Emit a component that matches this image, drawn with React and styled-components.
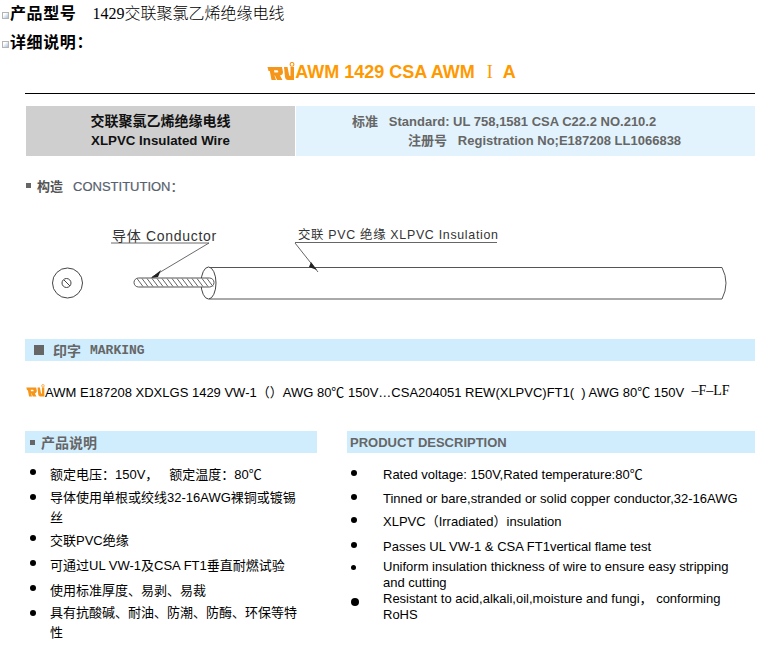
import React from "react";
import styled, { createGlobalStyle } from "styled-components";

const CJK = `"Liberation Sans", "Noto Sans CJK SC", sans-serif`;

const Global = createGlobalStyle`
  html, body { margin: 0; padding: 0; background: #fff; }
  body { font-family: ${CJK}; color: #000; overflow: hidden; }
`;

const Page = styled.div`
  width: 757px;
  height: 655px;
  overflow: hidden;
`;

const FirstRows = styled.div`
  margin-top: -3px;
`;

const HeadRow = styled.div`
  display: flex;
  align-items: center;
  height: 29px;
  padding-left: 2px;
`;

const Broken = styled.span`
  width: 5px;
  height: 5px;
  margin: 8px 1px 0 0;
  border: 1px solid #b4b4b4;
  background: linear-gradient(135deg, #fff 30%, #a9bfdc 100%);
  flex: none;
`;

const HeadLabel = styled.b`
  font-size: 16px;
  letter-spacing: 0.6px;
  font-weight: 700;
`;

const HeadValue = styled.span`
  margin-left: 16px;
  font-size: 16px;
  font-family: "Liberation Serif", "Noto Sans CJK SC", serif;
  font-weight: 300;
`;

const Content = styled.div`
  padding: 0 2px 0 25px;
`;

const Title = styled.div`
  display: flex;
  justify-content: center;
  align-items: flex-end;
  height: 23px;
  margin: 4px 0 0 3px;
  color: #ff9900;
  font-size: 18px;
  font-weight: 700;
  line-height: 20px;
  white-space: pre;
`;

const Numeral = styled.span`
  margin: 0 10px 0 12px;
  font-family: "Liberation Serif", serif;
  font-weight: 400;
`;

const LogoMark = styled.svg`
  flex: none;
`;

const Rule = styled.hr`
  height: 1px;
  margin: 11px 0 0;
  border: 0;
  background: #000;
`;

const Spec = styled.div`
  display: grid;
  grid-template-columns: 269px 459px;
  column-gap: 1px;
  height: 50px;
  margin: 12px 0 0 1px;
  font-weight: 700;
  line-height: 19px;
`;

const SpecName = styled.div`
  display: flex;
  flex-direction: column;
  justify-content: center;
  align-items: center;
  background: #cfcfcf;
  color: #111;
  font-size: 14px;
`;

const SpecNameEn = styled.div`
  font-size: 13.3px;
`;

const SpecInfo = styled.div`
  display: flex;
  flex-direction: column;
  justify-content: center;
  background: #e3f3fd;
  color: #666;
  font-size: 13px;
  white-space: pre;
`;

const SpecLine = styled.div`
  padding-left: ${(p) => p.$indent}px;
`;

const Construct = styled.div`
  margin: 21px 0 0 1px;
  height: 16px;
  display: flex;
  align-items: center;
  font-size: 13px;
  font-weight: 700;
  color: #555;
`;

const Square = styled.span`
  width: ${(p) => p.$size}px;
  height: ${(p) => p.$size}px;
  margin-right: ${(p) => p.$gap}px;
  background: #666;
  flex: none;
`;

const ConstructEn = styled.span`
  margin-left: 10px;
  font-weight: 400;
  font-size: 13px;
  color: #56606c;
  -webkit-text-stroke: 0.2px #56606c;
`;

const Drawing = styled.svg`
  display: block;
  width: 730px;
  height: 137px;
  margin-top: 9px;
`;

const Band = styled.div`
  display: flex;
  align-items: center;
  height: 22px;
  background: #d0edfe;
  color: #666;
  font-weight: 700;
  font-size: ${(p) => p.$size || 14}px;
  padding-left: ${(p) => p.$pad}px;
`;

const MarkLabel = styled.span`
  margin-right: 9px;
`;

const MarkWord = styled.span`
  font-family: "Liberation Mono", monospace;
  font-size: 13px;
  font-weight: 700;
`;

const MarkingLine = styled.div`
  display: flex;
  align-items: center;
  height: 20px;
  margin: 20px 0 0 1px;
  font-size: 13px;
  white-space: pre;
  color: #000;
`;

const SerifBit = styled.span`
  font-family: "Liberation Serif", serif;
  font-size: 14px;
`;

const Columns = styled.div`
  display: grid;
  grid-template-columns: 292px 408px;
  column-gap: 30px;
  margin-top: 30px;
`;

const List = styled.ul`
  list-style: none;
  margin: ${(p) => p.$gap}px 0 0;
  padding: 0;
  font-size: 13px;
  line-height: ${(p) => p.$line}px;
  white-space: pre-wrap;
`;

const Item = styled.li`
  position: relative;
  margin-top: ${(p) => p.$top || 0}px;
  padding-left: ${(p) => p.$indent}px;
  padding-right: ${(p) => p.$right}px;
  &::before {
    content: "";
    position: absolute;
    left: ${(p) => p.$dotLeft}px;
    top: ${(p) => p.$dotTop}px;
    width: ${(p) => p.$dot || 6}px;
    height: ${(p) => p.$dot || 6}px;
    border-radius: 50%;
    background: #000;
  }
`;

const Logo = ({ width, height }) => (
  <LogoMark width={width} height={height} viewBox="0 0 28 20">
    <g fill="#f5961a">
      <path
        fillRule="evenodd"
        d="M0.5 5 H15 L16 10 Q16 13 13 13.5 L15.5 18 H10 L8 13.5 H7.5 L9 18 H4.5 L2.8 9 H1.5 Z M7 8.2 L7.4 10.5 H10.5 Q11.5 10.5 11.2 9.2 Q11 8.2 10 8.2 Z"
      />
      <path d="M17 5 H20.5 L22 12.5 Q22.4 14.5 23.5 14 V5 H27 V18 H21 Q18.5 18 18 15 Z" />
    </g>
    <circle cx="25" cy="2.4" r="1.9" fill="none" stroke="#f5961a" strokeWidth="1.1" />
  </LogoMark>
);

const hatch = Array.from({ length: 15 }, (_, i) => 137 + i * 5);

const CableDrawing = () => (
  <Drawing viewBox="25 202 730 137">
    <g fill="none" stroke="#444" strokeWidth="1">
      {/* end view */}
      <circle cx="67.5" cy="283" r="15" />
      <ellipse cx="66.5" cy="283" rx="4.5" ry="4.5" />
      <path d="M64 280 L70 286" />
      {/* jacket */}
      <ellipse cx="208.5" cy="283" rx="7.5" ry="16" fill="#fff" />
      <path d="M209 267.5 H722 Q730 283 722 299 H209" stroke="#555" />
      {/* strands */}
      <rect x="134" y="278" width="80" height="9" rx="4.5" fill="#fff" stroke="#555" />
      {hatch.map((x) => (
        <path key={x} d={`M${x} 278.5 L${x + 6} 286.5`} stroke="#666" />
      ))}
      {/* leaders */}
      <path d="M111 243 H209 L152 277" strokeWidth="0.8" />
      <path d="M295 242.5 H497 M295 243 L318 272" stroke="#555" strokeWidth="0.9" />
    </g>
    <path d="M151 278 L161 270 L158 277 Z" fill="#222" />
    <path d="M311 262 L317 270 L309 267 Z" fill="#222" />
    <g fontFamily={CJK} fill="#333">
      <text x="112" y="241" fontSize="14" letterSpacing="0.7">导体 Conductor</text>
      <text x="298" y="239" fontSize="12.4" letterSpacing="0.7">交联 PVC 绝缘 XLPVC Insulation</text>
    </g>
  </Drawing>
);

const zh = [
  { t: "额定电压：150V，   额定温度：80℃", top: 0, dotTop: 4 },
  { t: "导体使用单根或绞线32-16AWG裸铜或镀锡丝", top: 3, dotTop: 6 },
  { t: "交联PVC绝缘", top: 3, dotTop: 4 },
  { t: "可通过UL VW-1及CSA FT1垂直耐燃试验", top: 5, dotTop: 4 },
  { t: "使用标准厚度、易剥、易裁", top: 5, dotTop: 4 },
  { t: "具有抗酸碱、耐油、防潮、防酶、环保等特性", top: 2, dotTop: 7 },
];

const en = [
  { t: "Rated voltage: 150V,Rated temperature:80℃", top: 0, dotTop: 3 },
  { t: "Tinned or bare,stranded or solid copper conductor,32-16AWG", top: 8, dotTop: 3 },
  { t: "XLPVC（Irradiated）insulation", top: 7, dotTop: 3 },
  { t: "Passes UL VW-1 & CSA FT1vertical flame test", top: 9, dotTop: 3 },
  { t: "Uniform insulation thickness of wire to ensure easy stripping and cutting", top: 4, dotTop: 6, dot: 5 },
  { t: "Resistant to acid,alkali,oil,moisture and fungi， conforming RoHS", top: 0, dotTop: 7, dot: 8 },
];

export default function App() {
  return (
    <Page>
      <Global />
      <FirstRows>
        <HeadRow>
          <Broken />
          <HeadLabel>产品型号</HeadLabel>
          <HeadValue>1429交联聚氯乙烯绝缘电线</HeadValue>
        </HeadRow>
        <HeadRow>
          <Broken />
          <HeadLabel>详细说明：</HeadLabel>
        </HeadRow>
      </FirstRows>
      <Content>
        <Title>
          <Logo width={28} height={20} />
          <span>AWM 1429 CSA AWM</span>
          <Numeral>I</Numeral>
          <span>A</span>
        </Title>
        <Rule />
        <Spec>
          <SpecName>
            <div>交联聚氯乙烯绝缘电线</div>
            <SpecNameEn>XLPVC Insulated Wire</SpecNameEn>
          </SpecName>
          <SpecInfo>
            <SpecLine $indent={56}>标准   Standard: UL 758,1581 CSA C22.2 NO.210.2</SpecLine>
            <SpecLine $indent={112}>注册号   Registration No;E187208 LL1066838</SpecLine>
          </SpecInfo>
        </Spec>
        <Construct>
          <Square $size={5} $gap={6} />
          构造
          <ConstructEn>CONSTITUTION：</ConstructEn>
        </Construct>
        <CableDrawing />
        <Band $pad={9}>
          <Square $size={10} $gap={9} />
          <MarkLabel>印字</MarkLabel>
          <MarkWord>MARKING</MarkWord>
        </Band>
        <MarkingLine>
          <Logo width={19} height={14} />
          AWM E187208 XDXLGS 1429 VW-1（）AWG 80℃ 150V…CSA204051 REW(XLPVC)FT1(  ) AWG 80℃ 150V  <SerifBit>–F–LF</SerifBit>
        </MarkingLine>
        <Columns>
          <div>
            <Band $pad={5}>
              <Square $size={5} $gap={6} />
              产品说明
            </Band>
            <List $gap={12} $line={20}>
              {zh.map((x) => (
                <Item key={x.t} $top={x.top} $indent={25} $right={17} $dotLeft={5} $dotTop={x.dotTop}>
                  {x.t}
                </Item>
              ))}
            </List>
          </div>
          <div>
            <Band $pad={3} $size={13}>PRODUCT DESCRIPTION</Band>
            <List $gap={14} $line={16}>
              {en.map((x) => (
                <Item key={x.t} $top={x.top} $indent={36} $right={16} $dotLeft={4} $dotTop={x.dotTop} $dot={x.dot}>
                  {x.t}
                </Item>
              ))}
            </List>
          </div>
        </Columns>
      </Content>
    </Page>
  );
}
